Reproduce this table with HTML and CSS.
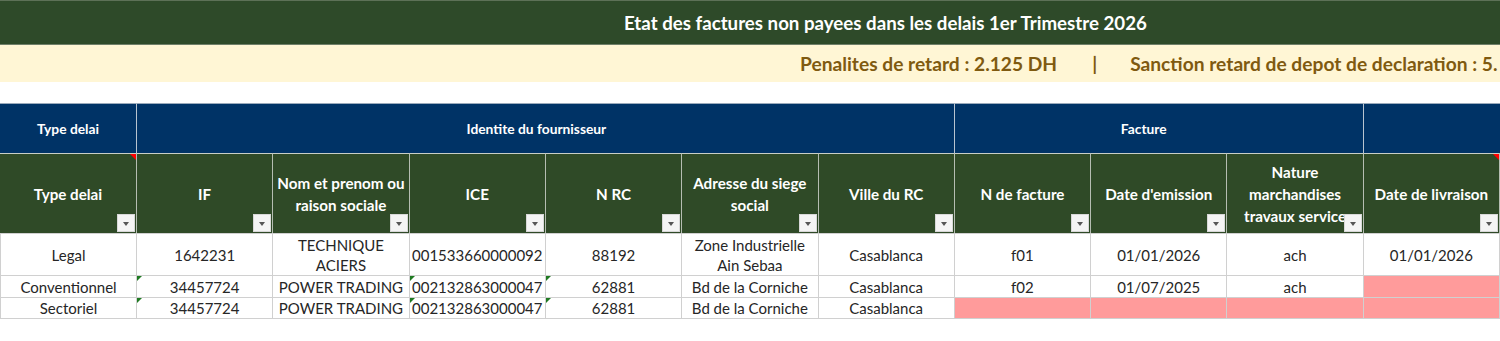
FILE: index.html
```html
<!DOCTYPE html>
<html lang="fr">
<head>
<meta charset="utf-8">
<title>Etat des factures</title>
<link rel="stylesheet" href="styles.css">
</head>
<body>
<div class="sheet">
  <div class="title-bar"><span class="title">Etat des factures non payees dans les delais 1er Trimestre 2026</span></div>
  <div class="penalty-bar"><span class="penalty">Penalites de retard : 2.125 DH</span><span class="sep">|</span><span class="penalty">Sanction retard de depot de declaration : 5.</span></div>
  <div class="spacer"></div>
  <div class="grid">
    <div class="grp">Type delai</div>
    <div class="grp span6">Identite du fournisseur</div>
    <div class="grp span3">Facture</div>
    <div class="grp last"></div>

    <div class="hd"><span>Type delai</span><i class="note"></i><b class="flt"></b></div>
    <div class="hd"><span>IF</span><b class="flt"></b></div>
    <div class="hd"><span>Nom et prenom ou raison sociale</span><b class="flt"></b></div>
    <div class="hd"><span>ICE</span><b class="flt"></b></div>
    <div class="hd"><span>N RC</span><b class="flt"></b></div>
    <div class="hd"><span>Adresse du siege social</span><b class="flt"></b></div>
    <div class="hd"><span>Ville du RC</span><b class="flt"></b></div>
    <div class="hd"><span>N de facture</span><b class="flt"></b></div>
    <div class="hd"><span>Date d'emission</span><b class="flt"></b></div>
    <div class="hd nature"><span>Nature marchandises travaux service</span><b class="flt"></b></div>
    <div class="hd"><span>Date de livraison</span><i class="note"></i><b class="flt"></b></div>

    <div class="c first r1">Legal</div>
    <div class="c r1">1642231</div>
    <div class="c r1 wrap">TECHNIQUE<br>ACIERS</div>
    <div class="c r1">001533660000092</div>
    <div class="c r1">88192</div>
    <div class="c r1 wrap">Zone Industrielle<br>Ain Sebaa</div>
    <div class="c r1">Casablanca</div>
    <div class="c r1">f01</div>
    <div class="c r1">01/01/2026</div>
    <div class="c r1">ach</div>
    <div class="c r1">01/01/2026</div>

    <div class="c first r2">Conventionnel</div>
    <div class="c r2 tag">34457724</div>
    <div class="c r2">POWER TRADING</div>
    <div class="c r2 tag">002132863000047</div>
    <div class="c r2 tag">62881</div>
    <div class="c r2">Bd de la Corniche</div>
    <div class="c r2">Casablanca</div>
    <div class="c r2">f02</div>
    <div class="c r2">01/07/2025</div>
    <div class="c r2">ach</div>
    <div class="c r2 miss"></div>

    <div class="c first r3">Sectoriel</div>
    <div class="c r3 tag">34457724</div>
    <div class="c r3">POWER TRADING</div>
    <div class="c r3 tag">002132863000047</div>
    <div class="c r3 tag">62881</div>
    <div class="c r3">Bd de la Corniche</div>
    <div class="c r3">Casablanca</div>
    <div class="c r3 miss"></div>
    <div class="c r3 miss"></div>
    <div class="c r3 miss"></div>
    <div class="c r3 miss"></div>
  </div>
</div>
</body>
</html>
```

FILE: styles.css
```css
* { box-sizing: border-box; }
html, body { margin: 0; padding: 0; background: #ffffff; }
body { font-family: Lato, "Liberation Sans", sans-serif; overflow: hidden; }
.sheet { width: 1500px; }

.title-bar {
  height: 45px;
  background: #2e4a29;
  border-top: 1px solid #5d7157;
  border-bottom: 1px solid #6f7f69;
  display: flex;
  align-items: center;
  padding-left: 624px;
  white-space: nowrap;
}
.title { color: #ffffff; font-weight: 700; font-size: 18.7px; }

.penalty-bar {
  height: 37px;
  background: #fff6d5;
  display: flex;
  align-items: center;
  padding-left: 800px;
  white-space: nowrap;
  overflow: hidden;
  color: #7f5a10;
  font-weight: 700;
  font-size: 19.2px;
}
.sep { margin: 0 33px 0 35px; }

.spacer { height: 21px; }

.grid {
  display: grid;
  grid-template-columns: 137px repeat(10, 1fr);
  grid-template-rows: 50px 80px 43px 22px 21px;
}

.grp {
  background: #003366;
  color: #ffffff;
  font-weight: 700;
  font-size: 13.8px;
  display: flex;
  align-items: center;
  justify-content: center;
  border-top: 1px solid #9aaabb;
  border-right: 1px solid #b8c4d0;
}
.span6 { grid-column: span 6; padding-right: 18px; }
.span3 { grid-column: span 3; padding-right: 30px; }
.grp.last { border-right: none; }

.hd {
  position: relative;
  background: #2f4a27;
  color: #ffffff;
  font-weight: 700;
  font-size: 15.2px;
  line-height: 22px;
  display: flex;
  align-items: center;
  justify-content: center;
  text-align: center;
  padding: 0 2px;
  border-top: 1px solid #c8cec6;
  border-right: 1px solid #b5bdb2;
}
.hd.nature { padding: 0 8px; }
.hd span { display: block; }

.flt {
  position: absolute;
  right: 1px;
  bottom: 1px;
  width: 18px;
  height: 18px;
  background: #f4f4f4;
  border: 1px solid #d8d8d8;
}
.flt::after {
  content: "";
  position: absolute;
  left: 5px;
  top: 7px;
  border-left: 3.5px solid transparent;
  border-right: 3.5px solid transparent;
  border-top: 4px solid #555555;
}

.note {
  position: absolute;
  top: 0;
  right: 0;
  width: 0;
  height: 0;
  border-top: 6px solid #ff0000;
  border-left: 6px solid transparent;
}

.c {
  position: relative;
  display: flex;
  align-items: center;
  justify-content: center;
  text-align: center;
  font-size: 15px;
  color: #262626;
  border-right: 1px solid #d0d0d0;
  border-bottom: 1px solid #d0d0d0;
  white-space: nowrap;
}
.c.r1 { border-top: 1px solid #d0d0d0; line-height: 20px; }
.c.first { border-left: 1px solid #d0d0d0; }
.c.miss { background: #ff9b9b; }

.tag::before {
  content: "";
  position: absolute;
  top: 0;
  left: 0;
  width: 0;
  height: 0;
  border-top: 5px solid #1f7a22;
  border-right: 5px solid transparent;
}
```
